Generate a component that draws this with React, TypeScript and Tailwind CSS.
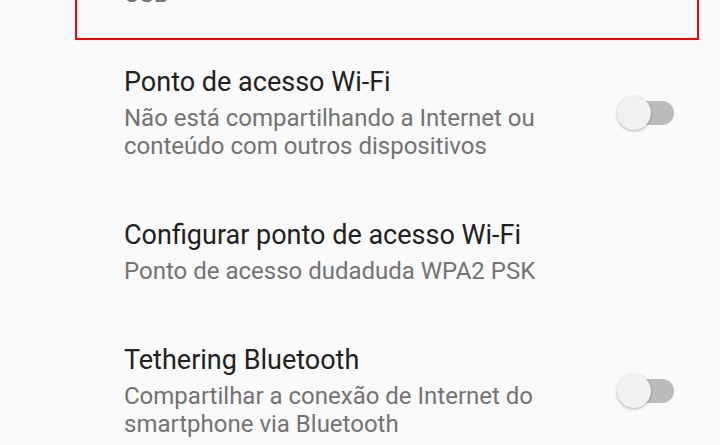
import React from 'react';

type Pref = {
  title: string;
  summary: string[];
  toggle?: boolean;
};

const PREFS: Pref[] = [
  {
    title: 'Ponto de acesso Wi-Fi',
    summary: ['Não está compartilhando a Internet ou', 'conteúdo com outros dispositivos'],
    toggle: true,
  },
  {
    title: 'Configurar ponto de acesso Wi-Fi',
    summary: ['Ponto de acesso dudaduda WPA2 PSK'],
  },
  {
    title: 'Tethering Bluetooth',
    summary: ['Compartilhar a conexão de Internet do', 'smartphone via Bluetooth'],
    toggle: true,
  },
];

const Switch: React.FC = () => (
  <div className="relative flex items-center w-[58px] h-[36px] shrink-0">
    <div className="w-[56px] h-[24px] ml-[2px] rounded-full bg-[#bcbcbc]" />
    <div className="absolute left-[1px] top-1/2 -translate-y-1/2 w-[34px] h-[34px] rounded-full bg-[#f1f1f1] shadow-[0_1px_3px_rgba(0,0,0,0.3)]" />
  </div>
);

const PrefRow: React.FC<{ pref: Pref }> = ({ pref }) => (
  <div className="pt-[26px] pb-[33px] pl-[124px] pr-[46px]">
    <div className="flex items-center">
      <div className="flex-1 min-w-0 pr-[30px]">
        <p className="text-[27px] leading-[32px] text-[#212121]">{pref.title}</p>
        <div className="mt-[6px] text-[24px] leading-[28px] text-[#737373]">
          {pref.summary.map(line => (
            <p key={line} className="whitespace-nowrap">{line}</p>
          ))}
        </div>
      </div>
      {pref.toggle && <Switch />}
    </div>
  </div>
);

export default function App() {
  return (
    <div className="w-[720px] h-[445px] overflow-hidden bg-[#fafafa] font-['Roboto',sans-serif]">
      {/* highlighted USB item, scrolled mostly off screen */}
      <div className="-mt-[22px] ml-[75px] mr-[21px] border-2 border-[#ff0000] pl-[47px] pb-[30px]">
        <p className="text-[24px] leading-[28px] text-[#737373]">USB</p>
      </div>
      {PREFS.map(p => (
        <PrefRow key={p.title} pref={p} />
      ))}
    </div>
  );
}
